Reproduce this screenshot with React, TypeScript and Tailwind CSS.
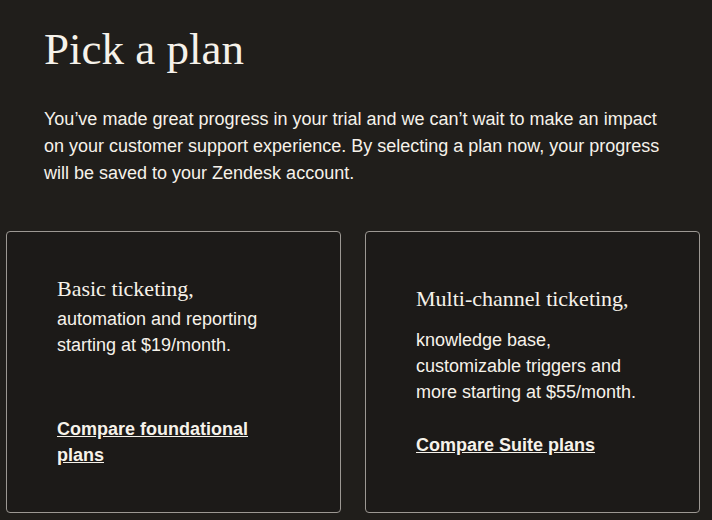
export default function App() {
  return (
    <div className="min-h-[520px] w-[712px] overflow-hidden bg-[#201e1b] pt-[27px] text-[#f6f2ea]">
      <h1 className="ml-[44px] font-['Liberation_Serif',serif] text-[45px] leading-[44px] font-normal">
        Pick a plan
      </h1>
      <p className="ml-[44px] mt-[35px] w-[625px] font-['Liberation_Sans',Arial,sans-serif] text-[18px] leading-[27px]">
        You’ve made great progress in your trial and we can’t wait to make an impact on your
        customer support experience. By selecting a plan now, your progress will be saved to your
        Zendesk account.
      </p>

      <div className="ml-[6px] mt-[44px] flex gap-[24px] font-['Liberation_Sans',Arial,sans-serif]">
        <div className="flex h-[282px] w-[335px] flex-col justify-center rounded-[4px] border border-[#9c9893] bg-[#1c1a18] px-[50px]">
          <h2 className="font-['Liberation_Serif',serif] text-[22px] leading-[26px] font-normal">
            Basic ticketing,
          </h2>
          <p className="mt-[4px] text-[18px] leading-[26px]">
            automation and reporting starting at $19/month.
          </p>
          <a href="#" className="mt-[58px] text-[18px] leading-[26px] font-bold underline">
            Compare foundational plans
          </a>
        </div>

        <div className="flex h-[282px] w-[335px] flex-col justify-center rounded-[4px] border border-[#9c9893] bg-[#1c1a18] px-[50px]">
          <h2 className="font-['Liberation_Serif',serif] text-[22px] leading-[26px] font-normal">
            Multi-channel ticketing,
          </h2>
          <p className="mt-[15px] text-[18px] leading-[26px]">
            knowledge base, customizable triggers and more starting at $55/month.
          </p>
          <a href="#" className="mt-[27px] text-[18px] leading-[26px] font-bold underline">
            Compare Suite plans
          </a>
        </div>
      </div>
    </div>
  );
}
